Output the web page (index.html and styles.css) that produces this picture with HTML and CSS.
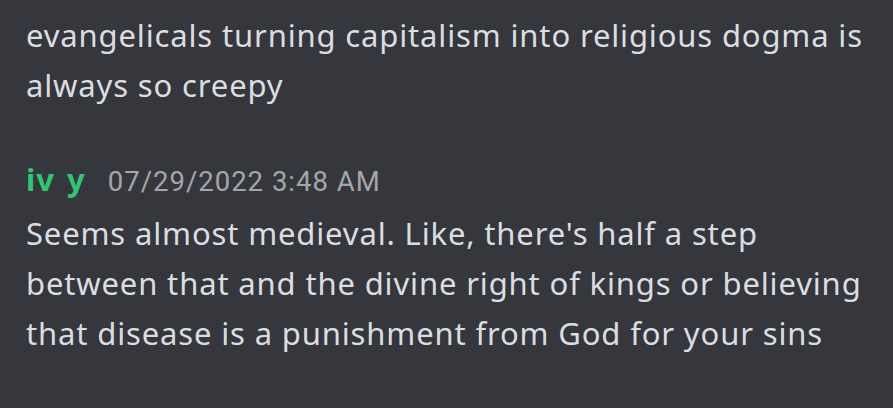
FILE: index.html
```html
<!DOCTYPE html>
<html>
<head>
<meta charset="utf-8">
<link rel="stylesheet" href="styles.css">
</head>
<body>
<div class="chat">
  <div class="msg prev">
    <p class="text">evangelicals turning capitalism into religious dogma is<br>always so creepy</p>
  </div>
  <div class="msg">
    <div class="header"><span class="name">iv y</span><span class="time">07/29/2022 3:48 AM</span></div>
    <p class="text">Seems almost medieval. Like, there's half a step<br>between that and the divine right of kings or believing<br>that disease is a punishment from God for your sins</p>
  </div>
</div>
</body>
</html>
```
FILE: styles.css
```css
html, body {
  margin: 0;
  padding: 0;
  background: #36373d;
  height: 100%;
  overflow: hidden;
}
.chat {
  padding: 10px 0 0 26px;
  font-family: "Noto Sans", sans-serif;
  color: #dbdee1;
  white-space: nowrap;
}
.text {
  margin: 0;
  font-size: 31px;
  line-height: 50px;
  letter-spacing: 0.85px;
}
.msg.prev {
  margin-bottom: 43px;
}
.header {
  display: flex;
  align-items: baseline;
  gap: 22px;
  line-height: 53px;
}
.name {
  font-size: 31px;
  font-weight: 700;
  letter-spacing: 1px;
  word-spacing: 3px;
  color: #2dc770;
}
.time {
  font-family: "Roboto", sans-serif;
  font-size: 27.5px;
  letter-spacing: 1px;
  color: #a3a6ab;
}
```
